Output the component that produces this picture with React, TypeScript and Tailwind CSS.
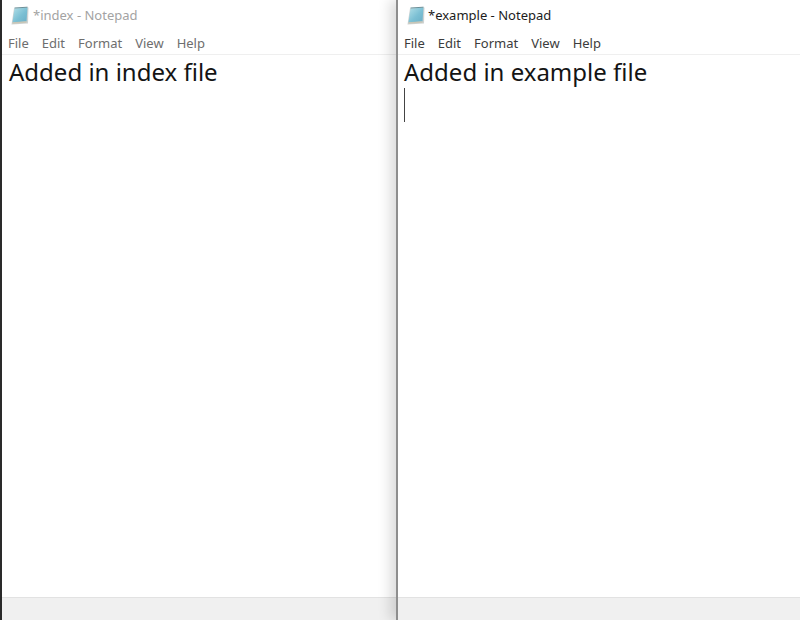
function NotepadIcon() {
  return (
    <svg width="20" height="20" viewBox="0 0 20 20" className="shrink-0">
      <defs>
        <linearGradient id="page" x1="0" y1="0" x2="1" y2="1">
          <stop offset="0" stopColor="#b4e0e8" />
          <stop offset="0.55" stopColor="#7cc0d4" />
          <stop offset="1" stopColor="#6aaec6" />
        </linearGradient>
      </defs>
      <path d="M4 2.5 L18.5 1.5 L18 17.5 L1.5 18.5 Z" fill="#a8aeae" opacity="0.55" />
      <path d="M4.5 2.5 L17.5 1.5 L16.5 15.5 L2.5 16.5 Z" fill="url(#page)" />
      <path d="M4.5 2 L17.5 1.2" stroke="#6b8f98" strokeWidth="1" fill="none" />
      <path d="M2.5 17 L16.5 16" stroke="#c9c6b6" strokeWidth="1.5" fill="none" />
    </svg>
  );
}

function Notepad({
  title,
  text,
  inactive,
  caret,
  className,
}: {
  title: string;
  text: string;
  inactive?: boolean;
  caret?: boolean;
  className: string;
}) {
  const menu = ['File', 'Edit', 'Format', 'View', 'Help'];
  return (
    <div className={`flex h-[620px] flex-col bg-white ${className}`}>
      <div className="flex h-[30px] items-center pl-[8px] pt-[1px]">
        <NotepadIcon />
        <span className={`text-[13px] leading-none ${inactive ? 'ml-[3px] text-[#a3a3a3]' : 'ml-[2px] text-[#1c1c1c]'}`}>{title}</span>
      </div>
      <div
        className={`flex h-[25px] items-center gap-[13px] border-b border-[#efefef] pl-[6px] pt-[2px] text-[13px] leading-none ${
          inactive ? 'text-[#6e6e6e]' : 'text-[#3c3c3c]'
        }`}
      >
        {menu.map((m) => (
          <span key={m}>{m}</span>
        ))}
      </div>
      <div className={`flex-1 ${inactive ? 'pl-[7px]' : 'pl-[6px]'}`}>
        <div className="h-[33px] text-[24px] leading-[33px] text-[#141414]">{text}</div>
        {caret && <div className="h-[34px] w-[1px] bg-[#444]" />}
      </div>
      <div className="h-[23px] border-t border-[#e2e2e2] bg-[#f0f0f0]" />
    </div>
  );
}

export default function App() {
  return (
    <div className="flex h-[620px] w-[800px] overflow-hidden bg-white font-['Noto_Sans',sans-serif]">
      <Notepad className="w-[396px] shrink-0 border-l-2 border-[#2a2a2a]" title="*index - Notepad" text="Added in index file" inactive />
      <Notepad
        className="relative z-10 flex-1 border-l-2 border-[#8e8e8e] shadow-[-6px_0_12px_rgba(0,0,0,0.14)]"
        title="*example - Notepad"
        text="Added in example file"
        caret
      />
    </div>
  );
}
